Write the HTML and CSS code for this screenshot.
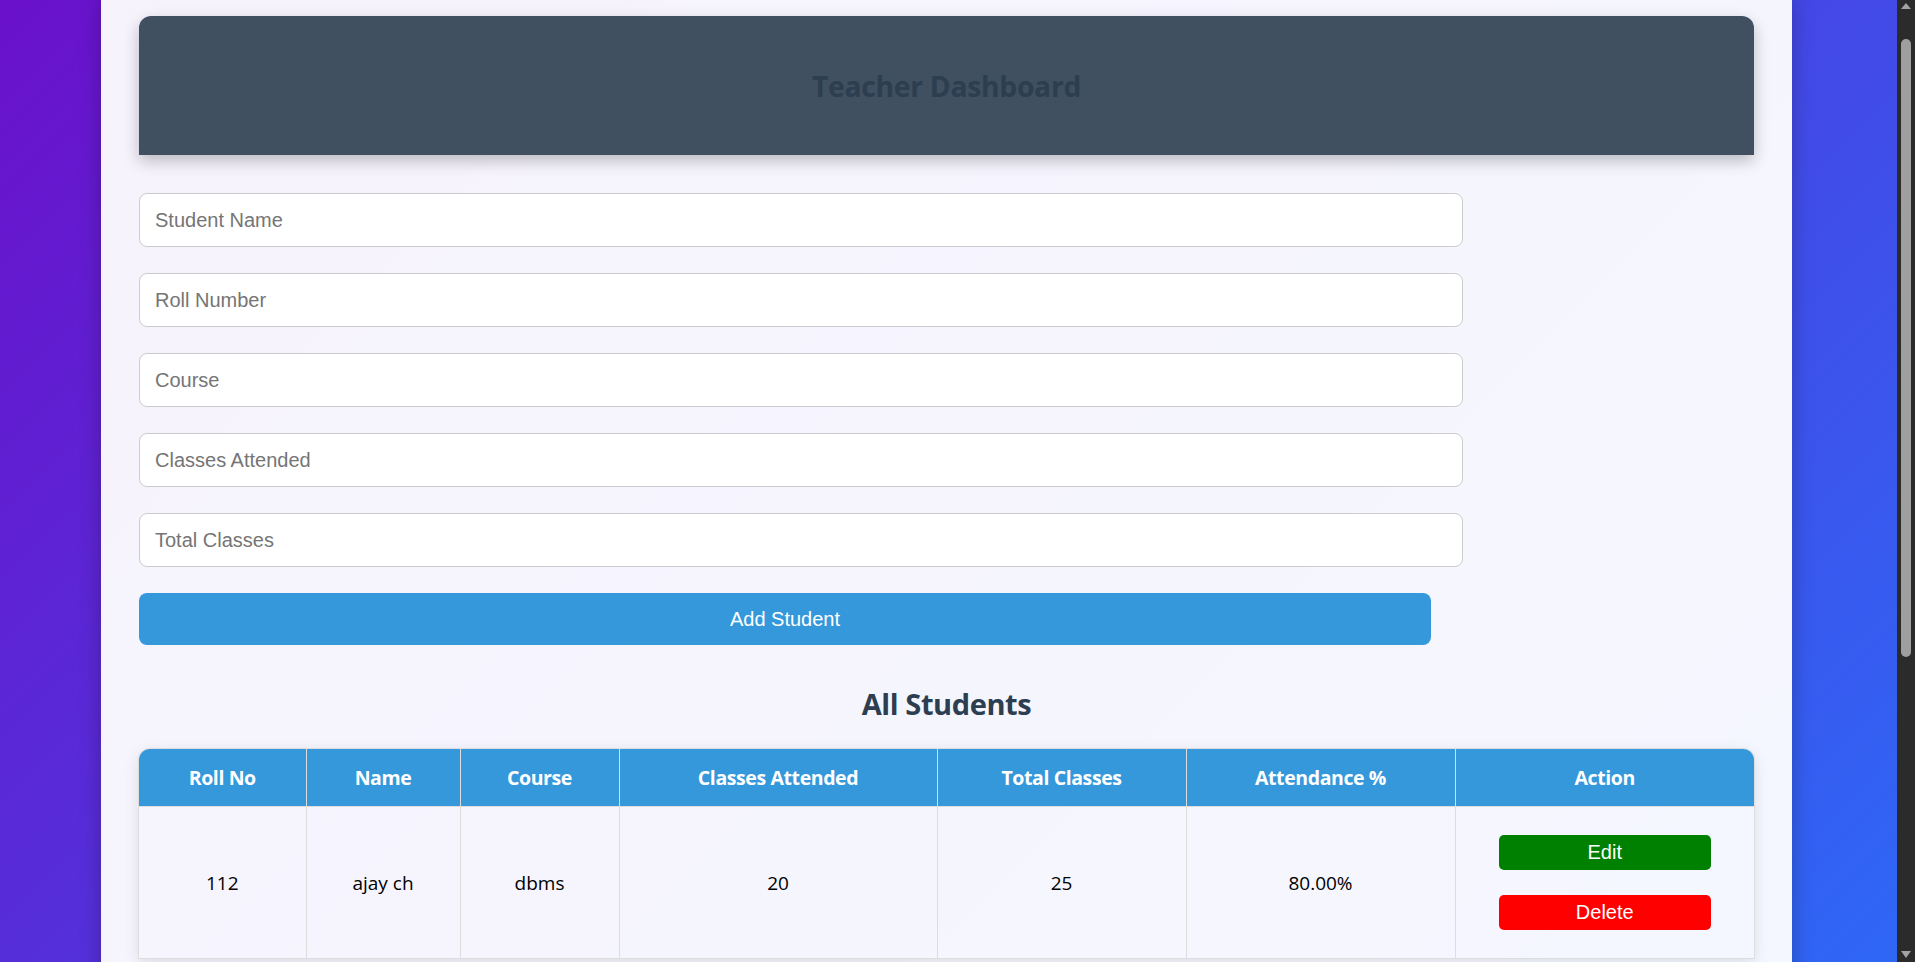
FILE: index.html
```html
<!DOCTYPE html>
<html lang="en">
<head>
<meta charset="utf-8">
<title>Teacher Dashboard</title>
<link rel="stylesheet" href="styles.css">
</head>
<body>
<div class="page">
  <div class="container">
    <header class="dash-header">
      <h1 class="dash-title">Teacher Dashboard</h1>
    </header>
    <form class="student-form">
      <input class="field" type="text" placeholder="Student Name">
      <input class="field" type="text" placeholder="Roll Number">
      <input class="field" type="text" placeholder="Course">
      <input class="field" type="text" placeholder="Classes Attended">
      <input class="field" type="text" placeholder="Total Classes">
      <button class="add-btn" type="button">Add Student</button>
    </form>
    <h2 class="section-title">All Students</h2>
    <div class="table-wrap">
      <table class="students">
        <colgroup>
          <col class="c-roll">
          <col class="c-name">
          <col class="c-course">
          <col class="c-att">
          <col class="c-total">
          <col class="c-pct">
          <col class="c-action">
        </colgroup>
        <thead>
          <tr>
            <th>Roll No</th>
            <th>Name</th>
            <th>Course</th>
            <th>Classes Attended</th>
            <th>Total Classes</th>
            <th>Attendance %</th>
            <th>Action</th>
          </tr>
        </thead>
        <tbody>
          <tr>
            <td>112</td>
            <td>ajay ch</td>
            <td>dbms</td>
            <td>20</td>
            <td>25</td>
            <td>80.00%</td>
            <td>
              <div class="actions">
                <button class="act-btn edit" type="button">Edit</button>
                <button class="act-btn delete" type="button">Delete</button>
              </div>
            </td>
          </tr>
        </tbody>
      </table>
    </div>
  </div>
</div>
<div class="scrollbar" aria-hidden="true">
  <div class="sb-btn"><span class="sb-arrow up"></span></div>
  <div class="sb-track"><div class="sb-thumb"></div></div>
  <div class="sb-btn"><span class="sb-arrow down"></span></div>
</div>
</body>
</html>
```

FILE: styles.css
```css
html, body {
  margin: 0;
  padding: 0;
}

body {
  display: flex;
  align-items: flex-start;
  background: #2b2b2b;
  font-family: "Open Sans", "Noto Sans", sans-serif;
  color: #000;
}

.page {
  flex: 1;
  min-width: 0;
  padding-right: 4px;
  background: linear-gradient(135deg, #6a11cb, #2575fc);
}

.container {
  width: 1615px;
  margin: 0 auto;
  padding: 16px 38px 472px;
  background: rgba(255, 255, 255, 0.95);
  box-shadow: 0 0 20px rgba(0, 0, 0, 0.25);
}

/* window scrollbar */
.scrollbar {
  width: 18px;
  height: 100vh;
  flex: none;
  display: flex;
  flex-direction: column;
  background: #2b2b2b;
}

.sb-btn {
  height: 18px;
  display: flex;
  align-items: center;
  justify-content: center;
}

.sb-arrow {
  width: 0;
  height: 0;
  border-left: 5px solid transparent;
  border-right: 5px solid transparent;
}

.sb-arrow.up {
  border-bottom: 6px solid #a3a3a3;
  margin-top: -6px;
}

.sb-arrow.down {
  border-top: 7px solid #a3a3a3;
  margin-top: 2px;
}

.sb-track {
  flex: 1;
  display: flex;
  justify-content: center;
}

.sb-thumb {
  width: 10px;
  height: 618px;
  margin-top: 21px;
  border-radius: 5px;
  background: #9f9f9f;
}

/* header */
.dash-header {
  height: 139px;
  display: flex;
  align-items: center;
  justify-content: center;
  background: rgba(44, 62, 80, 0.9);
  border-radius: 12px 12px 0 0;
  box-shadow: 0 6px 16px rgba(0, 0, 0, 0.24);
}

.dash-title {
  margin: 0;
  font-size: 28.3px;
  font-weight: 700;
  color: #2c3e50;
  letter-spacing: -0.3px;
}

/* form */
.student-form {
  margin-top: 38px;
}

.field {
  display: block;
  box-sizing: content-box;
  width: 80%;
  height: 52px;
  padding: 0 15px;
  margin: 0 0 26px;
  border: 1px solid #ccc;
  border-radius: 8px;
  background: #fff;
  font-family: "Liberation Sans", Arial, sans-serif;
  font-size: 20px;
  color: #333;
  outline: none;
}

.field::placeholder {
  color: #757575;
}

.add-btn {
  display: block;
  width: 80%;
  height: 52px;
  border: none;
  border-radius: 8px;
  background: #3498db;
  color: #fff;
  font-family: "Liberation Sans", Arial, sans-serif;
  font-size: 20px;
}

.section-title {
  margin: 39px 0 24px;
  height: 40px;
  line-height: 40px;
  text-align: center;
  font-size: 29px;
  font-weight: 700;
  color: #2c3e50;
  letter-spacing: -0.4px;
}

/* table */
.table-wrap {
  border-radius: 12px 12px 0 0;
  overflow: hidden;
  border: 1px solid #ddd;
  border-bottom: none;
  box-shadow: 0 4px 15px rgba(0, 0, 0, 0.1);
  margin: 0 -1px;
}

.students {
  width: 100%;
  table-layout: fixed;
  border-collapse: collapse;
}

.c-roll { width: 167px; }
.c-name { width: 154px; }
.c-course { width: 159px; }
.c-att { width: 318px; }
.c-total { width: 249px; }
.c-pct { width: 269px; }
.c-action { width: 299px; }

.students th,
.students td {
  border: 1px solid #ddd;
  text-align: center;
  padding: 0 18px;
}

.students tr > :first-child { border-left: none; }
.students tr > :last-child { border-right: none; }
.students thead th { border-top: none; }

.students th {
  height: 57px;
  background: #3498db;
  color: #fff;
  font-size: 19.5px;
  font-weight: 700;
  letter-spacing: -0.4px;
}

.students td {
  height: 151px;
  font-size: 19px;
  color: #000;
}

.actions {
  display: flex;
  flex-direction: column;
  align-items: center;
  gap: 25px;
}

.act-btn {
  width: 212px;
  height: 35px;
  border: none;
  border-radius: 5px;
  color: #fff;
  font-family: "Liberation Sans", Arial, sans-serif;
  font-size: 20px;
  padding: 0;
}

.act-btn.edit { background: #008000; }
.act-btn.delete { background: #ff0000; }
```
